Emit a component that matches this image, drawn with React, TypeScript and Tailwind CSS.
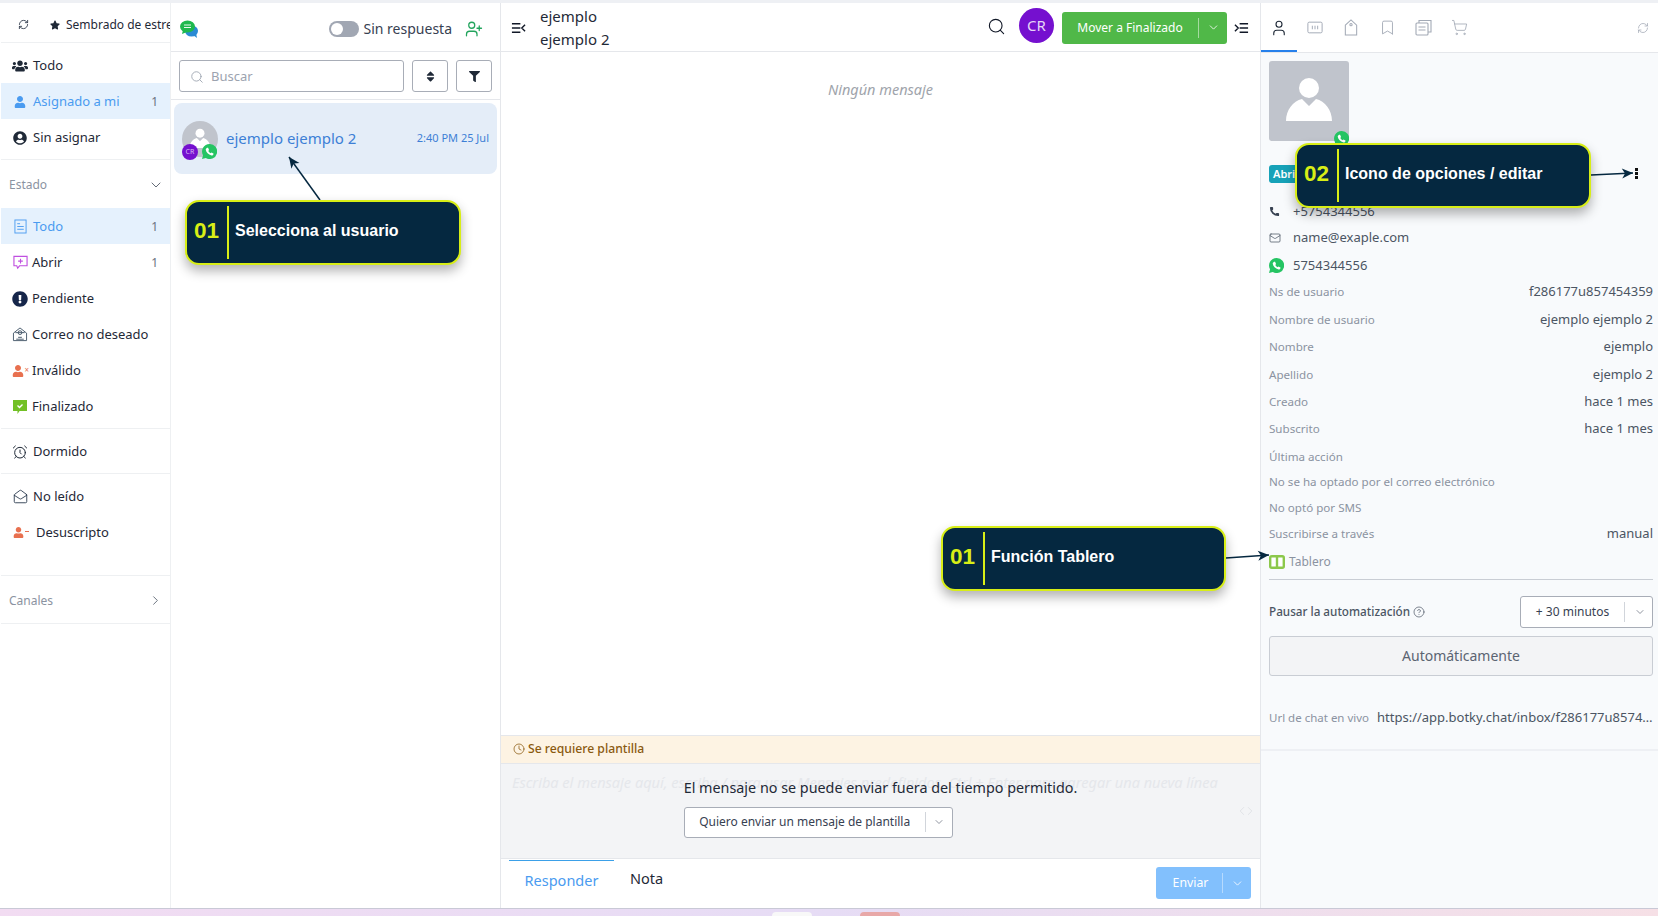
import React from "react";
import { AlarmClock, ChevronDown, ChevronRight, CircleHelp, Clock, Code, Mail, MailOpen, Phone, RefreshCw, Search, ShoppingCart, Bookmark, User, UserPlus } from "lucide-react";
import { FaUsers, FaUser, FaUserCircle, FaStar, FaExclamationCircle, FaFilter, FaSort } from "react-icons/fa";

const font = { fontFamily: '"Noto Sans", sans-serif' };

function AvatarShape({ className }: { className: string }) {
  return (
    <svg viewBox="0 0 80 80" className={className}>
      <circle cx="40" cy="27" r="10" fill="#fff" />
      <path d="M17 60c0-11 7-20 16-22l7 7 7-7c9 2 16 11 16 22z" fill="#fff" />
    </svg>
  );
}

function WaIcon({ className }: { className: string }) {
  return (
    <svg viewBox="0 0 16 16" className={className}>
      <path d="M8 0a8 8 0 0 0-6.9 12L0 16l4.1-1.1A8 8 0 1 0 8 0z" fill="#25c463" />
      <path d="M5.5 4l1 0 1 2.4-.8 1c.5 1 1.3 1.8 2.4 2.4l1-.8 2.1 1v1c-.3 1-1 1.4-2 1.2-3.5-.7-5.6-3.2-6.2-6-.1-.8.5-1.7 1.5-2.2z" fill="#fff" />
    </svg>
  );
}

function NavRow({ icon, label, count, active, gap }: { icon: React.ReactNode; label: string; count?: string; active?: boolean; gap: string }) {
  return (
    <div className={`h-9 flex items-center pl-[11px] pr-[11px] pt-[1px] text-[13px] ${active ? "bg-[#e5f1fd] text-[#4a9bf0]" : "text-[#1f2937]"}`}>
      <span className={`w-[16px] flex justify-center shrink-0 ${gap}`}>{icon}</span>
      <span className="flex-1 whitespace-nowrap">{label}</span>
      {count && <span className="text-[#6b7280] text-[12px] mr-[1px]">{count}</span>}
    </div>
  );
}

function Callout({ pos, num, text }: { pos: string; num: string; text: string }) {
  return (
    <div className={`absolute z-20 flex items-start rounded-[14px] border-2 border-[#d8ee16] bg-[#052840] shadow-[0_6px_12px_rgba(0,0,0,0.3)] ${pos}`} style={{ fontFamily: '"Liberation Sans", sans-serif' }}>
      <div className="w-[40px] h-full flex items-center pl-[7px] pb-[3px] text-[#d8ee16] font-bold text-[22.5px]">{num}</div>
      <div className="w-[2px] h-[53px] mt-[4px] bg-[#d8ee16]"></div>
      <div className="pl-[6px] pt-[17px] text-white font-bold text-[16px] whitespace-nowrap">{text}</div>
    </div>
  );
}

function Row({ h, label, value }: { h: string; label: string; value?: string }) {
  return (
    <div className={`flex justify-between items-center whitespace-nowrap ${h}`}>
      <span className="text-[11.6px] text-[#8b93a1]">{label}</span>
      {value && <span className="text-[13px] text-[#4b5563]">{value}</span>}
    </div>
  );
}

function Arrow({ x1, y1, x2, y2 }: { x1: number; y1: number; x2: number; y2: number }) {
  const a = Math.atan2(y2 - y1, x2 - x1);
  const p = (d: number, o: number) => `${x2 - d * Math.cos(a) - o * Math.sin(a)},${y2 - d * Math.sin(a) + o * Math.cos(a)}`;
  return (
    <>
      <line x1={x1} y1={y1} x2={x2} y2={y2} stroke="#052840" strokeWidth="1.5" />
      <polygon points={`${x2},${y2} ${p(11, 5)} ${p(8, 0)} ${p(11, -5)}`} fill="#052840" />
    </>
  );
}

export default function App() {
  return (
    <div className="relative w-[1658px] h-[916px] overflow-hidden flex flex-col bg-[#eef0f4]" style={font}>
      <div className="h-[3px] shrink-0"></div>
      <div className="flex flex-1 min-h-0 bg-white pl-[1px]">
        {/* nav */}
        <div className="w-[170px] shrink-0 border-r border-[#eef0f2] flex flex-col">
          <div className="h-[40px] shrink-0 border-b border-[#eef0f2] flex items-center pt-[4px] overflow-hidden whitespace-nowrap text-[12px] text-[#1f2937]">
            <RefreshCw className="w-[11px] h-[11px] ml-[17px] mr-[21px] text-[#374151] shrink-0" />
            <FaStar className="w-[10px] h-[10px] mr-[6px] shrink-0 text-[#1f2937]" />
            <span>Sembrado de estrellas</span>
          </div>
          <div className="pt-[4px] pb-[4px] border-b border-[#eef0f2]">
            <NavRow gap="mr-[5px]" icon={<FaUsers className="w-[16px] h-[16px] text-[#1f2937]" />} label="Todo" />
            <NavRow gap="mr-[5px]" active icon={<FaUser className="w-[12px] h-[12px] text-[#4a9bf0]" />} label="Asignado a mi" count="1" />
            <NavRow gap="mr-[5px]" icon={<FaUserCircle className="w-[14px] h-[14px] text-[#1f2937]" />} label="Sin asignar" />
          </div>
          <div className="h-[48px] flex items-center justify-between pl-[8px] pr-[6px] pt-[1px] text-[12px] text-[#8b93a1]">
            <span>Estado</span>
            <ChevronDown className="w-[16px] h-[16px] text-[#4b5563]" strokeWidth={1.3} />
          </div>
          <div className="pb-[4px] border-b border-[#eef0f2]">
            <NavRow gap="mr-[5px]" active icon={<svg viewBox="0 0 14 16" className="w-[13px] h-[15px]" fill="none" stroke="#4a9bf0" strokeWidth="1"><rect x="1" y="1" width="12" height="14" /><path d="M3.5 5h3M3.5 8h7M3.5 11h7" /></svg>} label="Todo" count="1" />
            <NavRow gap="mr-[4px]" icon={<svg viewBox="0 0 16 16" className="w-[15px] h-[15px]" fill="none" stroke="#c04fe0" strokeWidth="1.2"><path d="M1 1.5h14v10H7l-2 2.5-1-2.5H1z" /><path d="M8 4v5M5.5 6.5h5" /></svg>} label="Abrir" count="1" />
            <NavRow gap="mr-[4px]" icon={<FaExclamationCircle className="w-[16px] h-[16px] text-[#16264a]" />} label="Pendiente" />
            <NavRow gap="mr-[4px]" icon={<svg viewBox="0 0 16 16" className="w-[16px] h-[15px]" fill="none" stroke="#44586a" strokeWidth="1"><path d="M1 6.5 8 1l7 5.5v8H1z" /><circle cx="8" cy="6" r="2" /><path d="M3 6h10M4 13h8M6 11h4" /></svg>} label="Correo no deseado" />
            <NavRow gap="mr-[4px]" icon={<span className="relative flex items-center"><FaUser className="w-[12px] h-[12px] text-[#e8704f] mr-[4px]" /><span className="absolute -right-[1px] top-[1px] text-[8px] leading-[8px] text-[#e8704f]">×</span></span>} label="Inválido" />
            <NavRow gap="mr-[4px]" icon={<svg viewBox="0 0 16 16" className="w-[16px] h-[16px]"><path d="M1 1h14v11H7.5l-2 3v-3H1z" fill="#72c025" /><path d="M5.5 6.5 7.5 8.5l3-3" fill="none" stroke="#fff" strokeWidth="1.4" /></svg>} label="Finalizado" />
          </div>
          <div className="py-[4px] border-b border-[#eef0f2]">
            <NavRow gap="mr-[5px]" icon={<AlarmClock className="w-[16px] h-[16px] text-[#1f2937]" strokeWidth={1.5} />} label="Dormido" />
          </div>
          <div className="pt-[4px] h-[102px] border-b border-[#eef0f2]">
            <NavRow gap="mr-[5px]" icon={<MailOpen className="w-[15px] h-[15px] text-[#26364a]" strokeWidth={1.4} />} label="No leído" />
            <NavRow gap="mr-[8px]" icon={<span className="relative flex items-center"><FaUser className="w-[11px] h-[11px] text-[#e8704f] mr-[4px]" /><span className="absolute -right-[1px] top-[4px] w-[4px] h-[1px] bg-[#e8704f]"></span></span>} label="Desuscripto" />
          </div>
          <div className="h-[48px] flex items-center justify-between pl-[8px] pr-[7px] pt-[2px] text-[12px] text-[#8b93a1] border-b border-[#eef0f2]">
            <span>Canales</span>
            <ChevronRight className="w-[15px] h-[15px] text-[#4b5563]" strokeWidth={1.3} />
          </div>
        </div>

        {/* conversation list */}
        <div className="w-[330px] shrink-0 border-r border-[#e5e7eb] flex flex-col">
          <div className="h-[49px] shrink-0 border-b border-[#e5e7eb] flex items-center pl-[9px] pr-[17px] pt-[4px]">
            <svg viewBox="0 0 18 18" className="w-[18px] h-[18px] shrink-0">
              <ellipse cx="11.5" cy="11" rx="6.5" ry="5.5" fill="#2a8ad4" />
              <path d="M13 15l4 3-1-5z" fill="#2a8ad4" />
              <ellipse cx="7.5" cy="6.5" rx="7.5" ry="6" fill="#1eb84d" />
              <path d="M3 10l-1 4 5-2z" fill="#1eb84d" />
              <path d="M4 5h7M4 7.5h7" stroke="#fff" strokeWidth="0.9" />
            </svg>
            <div className="flex-1"></div>
            <span className="relative w-[30px] h-[16px] rounded-full bg-[#a1a7b3] mr-[5px]">
              <span className="absolute left-[2px] top-[2px] w-[12px] h-[12px] rounded-full bg-white"></span>
            </span>
            <span className="text-[14px] text-[#374151] mr-[13px] mb-[2px] whitespace-nowrap">Sin respuesta</span>
            <UserPlus className="w-[18px] h-[18px] text-[#22a45d]" strokeWidth={1.7} />
          </div>
          <div className="h-[48px] shrink-0 border-b border-[#e5e7eb] flex items-center pl-[8px] pr-[8px] pt-[1px] gap-[8px]">
            <div className="flex-1 h-[32px] rounded-[3px] border border-[#a8adb7] flex items-center pl-[10px] pt-[1px] text-[13px] text-[#9ca3af]">
              <Search className="w-[14px] h-[14px] mr-[7px] text-[#9ca3af]" strokeWidth={1.5} />
              Buscar
            </div>
            <div className="w-[36px] h-[32px] rounded-[3px] border border-[#a8adb7] flex items-center justify-center"><FaSort className="w-[13px] h-[13px] text-[#1f2937]" /></div>
            <div className="w-[36px] h-[32px] rounded-[3px] border border-[#a8adb7] flex items-center justify-center"><FaFilter className="w-[11px] h-[11px] text-[#1f2937]" /></div>
          </div>
          <div className="pt-[3px] pl-[3px] pr-[3px]">
            <div className="h-[71px] rounded-[8px] bg-[#e4edf8] flex items-center pl-[8px] pr-[8px] relative">
              <div className="relative w-[36px] h-[36px] rounded-full bg-[#c0c4cc] overflow-hidden shrink-0">
                <AvatarShape className="w-[36px] h-[36px]" />
              </div>
              <span className="absolute left-[8px] top-[41px] w-[16px] h-[16px] rounded-full bg-[#7510cf] text-[#d6b8f2] text-[7px] flex items-center justify-center">CR</span>
              <WaIcon className="absolute left-[28px] top-[41px] w-[15px] h-[15px]" />
              <span className="ml-[8px] flex-1 text-[15px] text-[#3d7fd6] whitespace-nowrap">ejemplo ejemplo 2</span>
              <span className="text-[11px] text-[#3d7fd6] whitespace-nowrap">2:40 PM 25 Jul</span>
            </div>
          </div>
        </div>

        {/* chat */}
        <div className="flex-1 min-w-0 flex flex-col">
          <div className="h-[49px] shrink-0 border-b border-[#e5e7eb] flex items-center pl-[10px] pr-[11px] pt-[1px]">
            <svg viewBox="0 0 16 12" className="w-[15px] h-[12px] mr-[14px]" fill="none" stroke="#111827" strokeWidth="1.5"><path d="M1 1.5h9M1 6h9M1 10.5h9M15 2.5 11.5 6l3.5 3.5" /></svg>
            <div className="text-[15px] leading-[23px] text-[#1f2937] w-[200px]">ejemplo<br />ejemplo 2</div>
            <div className="flex-1"></div>
            <Search className="w-[19px] h-[19px] text-[#111827] mr-[13px] mb-[2px]" strokeWidth={1.4} />
            <div className="w-[35px] h-[35px] rounded-full bg-[#7510cf] text-[#e6d5f7] text-[15px] flex items-center justify-center mr-[8px] mb-[4px]">CR</div>
            <div className="w-[165px] h-[32px] rounded-[3px] bg-[#50b848] text-white text-[12px] flex items-center">
              <span className="w-[136px] text-center whitespace-nowrap">Mover a Finalizado</span>
              <span className="w-[1px] h-[20px] bg-[#a5dba0]"></span>
              <ChevronDown className="w-[13px] h-[13px] ml-[8px]" strokeWidth={1.5} />
            </div>
            <svg viewBox="0 0 16 12" className="w-[15px] h-[12px] ml-[7px]" fill="none" stroke="#111827" strokeWidth="1.5"><path d="M6 1.5h9M6 6h9M6 10.5h9M1 2.5 4.5 6 1 9.5" /></svg>
          </div>
          <div className="flex-1 flex justify-center pt-[27px] text-[14.5px] italic text-[#a0a4ab]">Ningún mensaje</div>
          <div className="h-[29px] shrink-0 border-y border-[#e5e7eb] bg-[#fdf3e3] flex items-center pl-[12px] pb-[1px] text-[12.2px] font-medium text-[#8a5a10]">
            <Clock className="w-[12px] h-[12px] mr-[3px]" strokeWidth={1.5} />
            Se requiere plantilla
          </div>
          <div className="h-[95px] shrink-0 bg-[#f3f4f6] border-b border-[#e5e7eb] relative flex flex-col items-center pt-[13px]">
            <span className="absolute left-[11px] top-[8px] text-[14.55px] italic text-[#e5e7eb] whitespace-nowrap">Escriba el mensaje aquí, escriba / para usar Mensajes predefinidos, Ctrl + Enter para agregar una nueva línea</span>
            <Code className="absolute left-[738px] top-[40px] w-[14px] h-[14px] text-[#d8dbe0]" strokeWidth={1.2} />
            <div className="relative flex flex-col items-start">
              <span className="text-[14.35px] text-[#1f2937] whitespace-nowrap">El mensaje no se puede enviar fuera del tiempo permitido.</span>
              <div className="mt-[8px] w-[269px] h-[31px] rounded-[3px] border border-[#a8adb7] bg-white flex items-center text-[12px] text-[#374151]">
                <span className="w-[240px] text-center whitespace-nowrap">Quiero enviar un mensaje de plantilla</span>
                <span className="w-[1px] h-[20px] bg-[#d1d5db]"></span>
                <ChevronDown className="w-[12px] h-[12px] ml-[7px] text-[#6b7280]" strokeWidth={1.5} />
              </div>
            </div>
          </div>
          <div className="h-[49px] shrink-0 flex pl-[8px] pr-[9px]">
            <div className="w-[105px] h-[37px] mt-[1px] border-t border-[#3ba0e8] flex items-center justify-center text-[14.5px] text-[#4a9bf0] pt-[4px]">Responder</div>
            <div className="ml-[16px] h-[37px] mt-[1px] flex items-center text-[14.5px] text-[#1f2937]">Nota</div>
            <div className="flex-1"></div>
            <div className="w-[95px] h-[32px] mt-[8px] rounded-[3px] bg-[#82c0fd] text-white text-[12.3px] flex items-center">
              <span className="w-[66px] pl-[3px] text-center">Enviar</span>
              <span className="w-[1px] h-[20px] bg-[#b6dafe]"></span>
              <ChevronDown className="w-[13px] h-[13px] ml-[8px]" strokeWidth={1.5} />
            </div>
          </div>
        </div>

        {/* details */}
        <div className="w-[398px] shrink-0 border-l border-[#e5e7eb] bg-[#f8fafc] flex flex-col">
          <div className="h-[50px] shrink-0 bg-white border-b border-[#e5e7eb] flex items-center relative pl-[9px] pr-[8px]">
            <span className="absolute left-0 bottom-0 w-[36px] h-[2px] bg-[#2680eb]"></span>
            <User className="w-[18px] h-[18px] text-[#1f2937] mr-[19px]" strokeWidth={1.5} />
            <svg viewBox="0 0 18 14" className="w-[16px] h-[13px] mr-[21px]" fill="none" stroke="#a3aab6" strokeWidth="1.1"><rect x="1" y="1" width="16" height="12" rx="1.5" /><path d="M6 5v4M9 5v4M12 5v4" /></svg>
            <svg viewBox="0 0 14 18" className="w-[14px] h-[17px] mr-[21px]" fill="none" stroke="#a3aab6" strokeWidth="1.1"><path d="M1 6.5 7 1l6 5.5V17H1z" /><circle cx="7" cy="6" r="1.2" /></svg>
            <Bookmark className="w-[17px] h-[17px] text-[#a3aab6] mr-[19px]" strokeWidth={1.3} />
            <svg viewBox="0 0 17 17" className="w-[17px] h-[17px] mr-[19px]" fill="none" stroke="#a3aab6" strokeWidth="1.1"><rect x="1" y="4" width="12" height="12" rx="1" /><path d="M4 4V1.5h12V13h-3M3.5 8h7M3.5 11h7" /></svg>
            <ShoppingCart className="w-[17px] h-[17px] text-[#a3aab6]" strokeWidth={1.2} />
            <div className="flex-1"></div>
            <RefreshCw className="w-[12px] h-[12px] text-[#a3aab6] mr-[1px]" strokeWidth={1.5} />
          </div>
          <div className="pl-[8px] pr-[5px] pt-[8px] flex flex-col">
            <div className="relative w-[80px] h-[80px] rounded-[3px] bg-[#c0c4cc] mb-[24px]">
              <AvatarShape className="w-[80px] h-[80px]" />
              <WaIcon className="absolute left-[65px] top-[70px] w-[15px] h-[15px]" />
            </div>
            <div className="w-[30px] h-[18px] rounded-[3px] bg-[#17a2b8] text-white text-[11px] font-semibold flex items-center pl-[4px] mb-[15px] overflow-hidden">Abrir</div>
            <div className="h-[27px] flex items-center text-[13px] text-[#4b5563]"><Phone className="w-[11px] h-[11px] mr-[13px] text-[#374151]" fill="#374151" strokeWidth={0} />+5754344556</div>
            <div className="h-[26px] flex items-center text-[13px] text-[#4b5563]"><Mail className="w-[12px] h-[12px] mr-[12px] text-[#4b5563]" strokeWidth={1.5} />name@exaple.com</div>
            <div className="h-[28px] pt-[1px] flex items-center text-[13px] text-[#4b5563]"><WaIcon className="w-[15px] h-[15px] mr-[9px]" />5754344556</div>
            <Row h="h-[26px]" label="Ns de usuario" value="f286177u857454359" />
            <Row h="h-[29px]" label="Nombre de usuario" value="ejemplo ejemplo 2" />
            <Row h="h-[26px]" label="Nombre" value="ejemplo" />
            <Row h="h-[29px]" label="Apellido" value="ejemplo 2" />
            <Row h="h-[25px]" label="Creado" value="hace 1 mes" />
            <Row h="h-[30px]" label="Subscrito" value="hace 1 mes" />
            <Row h="h-[26px]" label="Última acción" />
            <Row h="h-[23px]" label="No se ha optado por el correo electrónico" />
            <Row h="h-[29px]" label="No optó por SMS" />
            <Row h="h-[23px]" label="Suscribirse a través" value="manual" />
            <div className="h-[35px] flex items-center text-[12px] text-[#8b93a1] border-b border-[#c9cdd4]">
              <svg viewBox="0 0 16 14" className="w-[16px] h-[14px] mr-[4px]"><rect x="1.2" y="1.2" width="13.6" height="11.6" rx="1.5" fill="#fff" stroke="#8cc84b" strokeWidth="2.4" /><path d="M8 1v12" stroke="#8cc84b" strokeWidth="2.4" /></svg>
              Tablero
            </div>
            <div className="h-[32px] mt-[16px] flex items-center justify-between">
              <span className="flex items-center text-[11.7px] font-medium text-[#4b5563] whitespace-nowrap">Pausar la automatización<CircleHelp className="w-[12px] h-[12px] ml-[3px]" strokeWidth={1.4} /></span>
              <div className="w-[133px] h-[32px] rounded-[3px] border border-[#a8adb7] bg-white flex items-center text-[12px] text-[#374151]">
                <span className="w-[103px] text-center whitespace-nowrap">+ 30 minutos</span>
                <span className="w-[1px] h-[20px] bg-[#d1d5db]"></span>
                <ChevronDown className="w-[12px] h-[12px] ml-[9px] text-[#6b7280]" strokeWidth={1.5} />
              </div>
            </div>
            <div className="h-[40px] mt-[8px] pb-[2px] rounded-[3px] border border-[#c9cdd4] bg-[#f3f4f6] flex items-center justify-center text-[14px] text-[#5b6472]">Automáticamente</div>
            <div className="h-[28px] mt-[28px] flex items-center whitespace-nowrap">
              <span className="text-[11.5px] text-[#8b93a1] w-[108px] shrink-0">Url de chat en vivo</span>
              <span className="text-[13px] text-[#4b5563] flex-1 min-w-0 overflow-hidden text-ellipsis">https://app.botky.chat/inbox/f286177u857454359</span>
            </div>
          </div>
          <div className="mt-[17px] border-b-2 border-[#eef0f4]"></div>
        </div>
      </div>

      {/* desktop strip */}
      <div className="h-[8px] shrink-0 border-t border-[#c9c9d6] bg-gradient-to-r from-[#f2dcf2] via-[#e6dcf5] to-[#f6e0e6] relative">
        <span className="absolute left-[772px] top-[3px] w-[40px] h-[8px] rounded-t-[4px] bg-[#f8f8f8]"></span>
        <span className="absolute left-[860px] top-[3px] w-[40px] h-[8px] rounded-t-[4px] bg-[#e8a8a8]"></span>
      </div>

      {/* tutorial callouts */}
      <Callout pos="left-[185px] top-[200px] w-[276px] h-[65px]" num="01" text="Selecciona al usuario" />
      <Callout pos="left-[1295px] top-[143px] w-[296px] h-[65px]" num="02" text="Icono de opciones / editar" />
      <Callout pos="left-[941px] top-[526px] w-[285px] h-[65px]" num="01" text="Función Tablero" />
      <svg className="absolute inset-0 z-10 pointer-events-none" width="1658" height="916">
        <Arrow x1={320} y1={200} x2={289} y2={157} />
        <Arrow x1={1591} y1={175} x2={1633} y2={173} />
        <Arrow x1={1226} y1={558} x2={1269} y2={555} />
        <rect x="1635" y="168" width="3" height="3" fill="#111" />
        <rect x="1635" y="172" width="3" height="3" fill="#111" />
        <rect x="1635" y="176" width="3" height="3" fill="#111" />
      </svg>
    </div>
  );
}
